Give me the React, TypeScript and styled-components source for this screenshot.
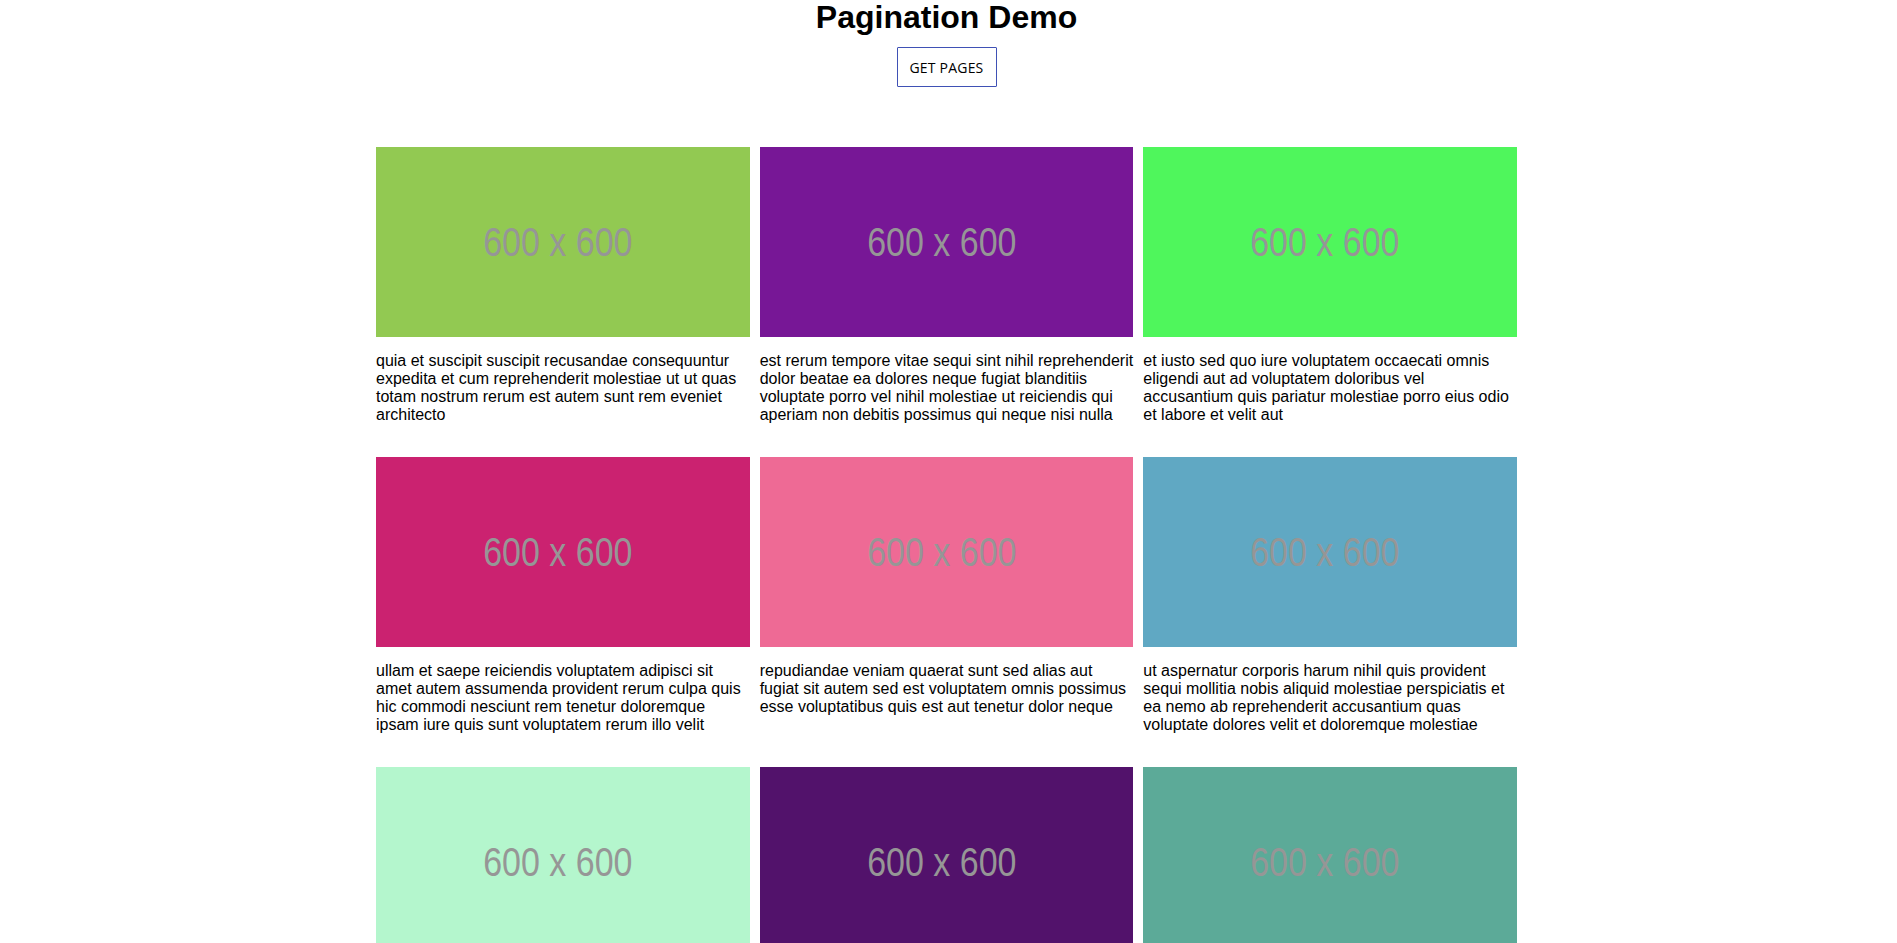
import React from "react";
import styled, { createGlobalStyle } from "styled-components";

const GlobalStyle = createGlobalStyle`
  html, body {
    margin: 0;
    padding: 0;
    background: #ffffff;
    color: #000000;
    font-family: "Liberation Sans", Arial, sans-serif;
  }
`;

const Page = styled.main`
  display: flex;
  flex-direction: column;
  align-items: center;
  padding-right: 4px;
`;

const Title = styled.h1`
  margin: 0;
  font-family: "Liberation Sans", Arial, sans-serif;
  font-weight: 700;
  font-size: 32px;
  line-height: 34px;
`;

const GetButton = styled.button`
  margin-top: 13px;
  width: 100px;
  height: 40px;
  padding: 0;
  background: #ffffff;
  border: 1px solid #3f51b5;
  border-radius: 1px;
  font-family: "Open Sans", "Noto Sans", sans-serif;
  font-size: 14px;
  font-weight: 500;
  color: #000000;
  letter-spacing: 0.2px;
  cursor: pointer;
`;

const Grid = styled.section`
  margin-top: 60px;
  width: 1141px;
  display: grid;
  grid-template-columns: repeat(3, 1fr);
  grid-auto-rows: 279px;
  column-gap: 10px;
  row-gap: 31px;
`;

const Card = styled.article`
  display: flex;
  flex-direction: column;
  min-width: 0;
`;

const Thumb = styled.div<{ $bg: string }>`
  height: 190px;
  background: ${(p) => p.$bg};
  display: flex;
  align-items: center;
  justify-content: center;
  padding-right: 10px;
  flex: none;
`;

const ThumbLabel = styled.span`
  font-family: "Liberation Sans", Arial, sans-serif;
  font-size: 40px;
  line-height: 1;
  color: #969696;
  transform: scaleX(0.85);
  white-space: nowrap;
`;

const Body = styled.p`
  margin: 15px 0 0;
  font-size: 16px;
  line-height: normal;
`;

const posts = [
  {
    color: "#92c952",
    body: "quia et suscipit suscipit recusandae consequuntur expedita et cum reprehenderit molestiae ut ut quas totam nostrum rerum est autem sunt rem eveniet architecto",
  },
  {
    color: "#771796",
    body: "est rerum tempore vitae sequi sint nihil reprehenderit dolor beatae ea dolores neque fugiat blanditiis voluptate porro vel nihil molestiae ut reiciendis qui aperiam non debitis possimus qui neque nisi nulla",
  },
  {
    color: "#4ff65c",
    body: "et iusto sed quo iure voluptatem occaecati omnis eligendi aut ad voluptatem doloribus vel accusantium quis pariatur molestiae porro eius odio et labore et velit aut",
  },
  {
    color: "#cb2270",
    body: "ullam et saepe reiciendis voluptatem adipisci sit amet autem assumenda provident rerum culpa quis hic commodi nesciunt rem tenetur doloremque ipsam iure quis sunt voluptatem rerum illo velit",
  },
  {
    color: "#ee6a95",
    body: "repudiandae veniam quaerat sunt sed alias aut fugiat sit autem sed est voluptatem omnis possimus esse voluptatibus quis est aut tenetur dolor neque",
  },
  {
    color: "#60a8c3",
    body: "ut aspernatur corporis harum nihil quis provident sequi mollitia nobis aliquid molestiae perspiciatis et ea nemo ab reprehenderit accusantium quas voluptate dolores velit et doloremque molestiae",
  },
  {
    color: "#b4f6cd",
    body: "quo et expedita modi cum officia vel magni doloribus qui repudiandae vero nisi sit quos veniam quod sed accusamus veritatis error",
  },
  {
    color: "#52126b",
    body: "dignissimos aperiam dolorem qui eum facilis quibusdam animi sint suscipit qui sint possimus cum quaerat magni maiores excepturi ipsam ut commodi dolor voluptatum modi aut vitae",
  },
  {
    color: "#5caa98",
    body: "consectetur animi nesciunt iure dolore enim quia ad veniam autem ut quam aut nobis et est aut quod aut provident voluptas autem voluptas",
  },
];

export default function App() {
  return (
    <>
      <GlobalStyle />
      <Page>
        <Title>Pagination Demo</Title>
        <GetButton type="button">GET PAGES</GetButton>
        <Grid>
          {posts.map((p, i) => (
            <Card key={i}>
              <Thumb $bg={p.color}>
                <ThumbLabel>600 x 600</ThumbLabel>
              </Thumb>
              <Body>{p.body}</Body>
            </Card>
          ))}
        </Grid>
      </Page>
    </>
  );
}
